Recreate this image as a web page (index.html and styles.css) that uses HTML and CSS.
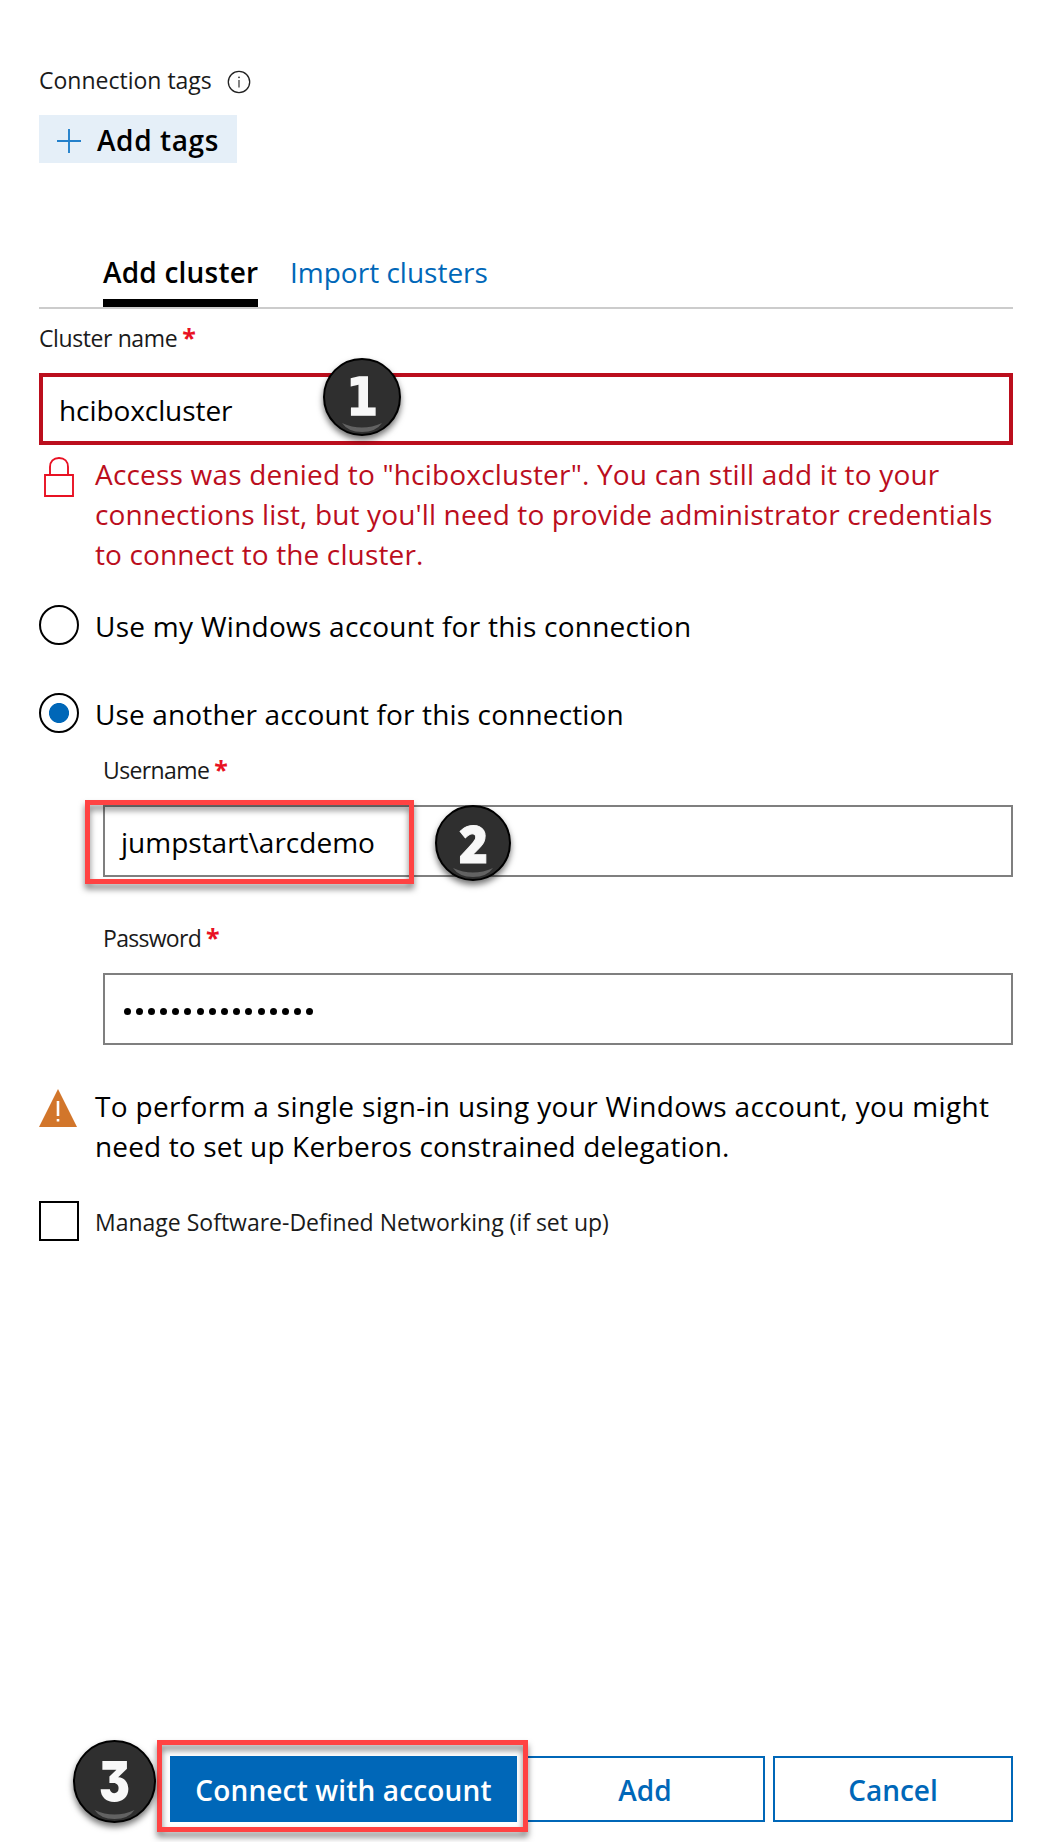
FILE: index.html
```html
<!DOCTYPE html>
<html lang="en">
<head>
<meta charset="utf-8">
<title>Add cluster</title>
<link rel="stylesheet" href="styles.css">
</head>
<body>
<main class="panel">
  <div class="label tags-label">Connection tags
    <svg class="info" viewBox="0 0 24 24"><circle cx="12" cy="12" r="10.7" fill="none" stroke="#222" stroke-width="1.3"/><path d="M12 10v7.5" stroke="#333" stroke-width="1.2"/><circle cx="12" cy="7.3" r=".9" fill="#333"/></svg>
  </div>
  <button class="add-tags">
    <svg class="plus" viewBox="0 0 24 24"><path d="M12 0v24M0 12h24" stroke="#2380cb" stroke-width="1.9"/></svg>
    <span>Add tags</span>
  </button>

  <nav class="tabs">
    <a class="tab active">Add cluster</a>
    <a class="tab">Import clusters</a>
  </nav>

  <div class="label cluster-label"><span>Cluster name</span><b class="req">*</b></div>
  <div class="field invalid">hciboxcluster</div>

  <div class="message error">
    <svg class="lock" viewBox="0 0 30 40" fill="none" stroke="#e81123" stroke-width="1.9"><path d="M1 18h28v21H1z"/><path d="M6 18V10C6 4.500 9.500 1 15 1s9 3.500 9 9v8"/></svg>
    <p><span class="s2">Access was denied to "hciboxcluster". You can still add it to your</span>
    <span class="s1">connections list, but you'll need to provide administrator credentials</span>
    <span class="s1">to connect to the cluster.</span></p>
  </div>

  <div class="choice first"><i class="radio"></i><span class="s3">Use my Windows account for this connection</span></div>
  <div class="choice second"><i class="radio checked"></i><span class="s1">Use another account for this connection</span></div>

  <section class="credentials">
    <div class="label user-label"><span>Username</span><b class="req">*</b></div>
    <div class="field">jumpstart\arcdemo</div>
    <div class="label pass-label"><span>Password</span><b class="req">*</b></div>
    <div class="field password">
      <i></i><i></i><i></i><i></i><i></i><i></i><i></i><i></i><i></i><i></i><i></i><i></i><i></i><i></i><i></i><i></i>
    </div>
  </section>

  <div class="message warning">
    <svg class="triangle" viewBox="0 0 38 38"><path d="M19 0l19 38H0z" fill="#d2762b"/><path d="M19 12v15M19 30v2.600" stroke="#fff" stroke-width="2.600"/></svg>
    <p><span class="s4">To perform a single sign-in using your Windows account, you might</span>
    <span class="s1">need to set up Kerberos constrained delegation.</span></p>
  </div>

  <div class="choice sdn"><i class="checkbox"></i><span>Manage Software-Defined Networking (if set up)</span></div>

  <footer class="actions">
    <button class="btn primary">Connect with account</button>
    <button class="btn">Add</button>
    <button class="btn">Cancel</button>
  </footer>
</main>

<div class="frame frame-user"></div>
<div class="frame frame-connect"></div>
<div class="badge badge-1"><span>1</span><svg viewBox="0 0 40 10"><path d="M0 0Q20 9 40 0Q34 9 20 9Q6 9 0 0z" fill="#626262"/></svg></div>
<div class="badge badge-2"><span>2</span><svg viewBox="0 0 40 10"><path d="M0 0Q20 9 40 0Q34 9 20 9Q6 9 0 0z" fill="#626262"/></svg></div>
<div class="badge badge-3"><span>3</span><svg viewBox="0 0 40 10"><path d="M0 0Q20 9 40 0Q34 9 20 9Q6 9 0 0z" fill="#626262"/></svg></div>
</body>
</html>
```
FILE: styles.css
```css
* { box-sizing: border-box; }
body {
  margin: 0;
  position: relative;
  width: 1055px;
  height: 1842px;
  overflow: hidden;
  background: #fff;
  color: #000;
  font: 28px/40px "Open Sans", "Noto Sans", sans-serif;
}
p { margin: 0; }
p span { display: block; white-space: nowrap; }
button { font: inherit; border: 0; margin: 0; padding: 0; color: inherit; }
svg { display: block; flex: none; }

.panel {
  display: flex;
  flex-direction: column;
  height: 1842px;
  padding: 64px 42px 20px 39px;
}

.label {
  display: flex;
  font-size: 23px;
  line-height: 32px;
  height: 32px;
  color: #1a1a1a;
}
.info { width: 24px; height: 24px; margin: 6px 0 0 15px; }
.req {
  color: #e81123;
  font: 700 25px/31px "Open Sans", sans-serif;
  margin-left: 5px;
}

.add-tags {
  display: flex;
  align-items: center;
  width: 198px;
  height: 48px;
  margin-top: 19px;
  padding-left: 18px;
  gap: 16px;
  background: #e5eff8;
  font-weight: 600;
  letter-spacing: .6px;
}
.add-tags span { padding-top: 2px; }
.plus { width: 24px; height: 24px; margin-top: 4px; }

.tabs {
  display: flex;
  gap: 32px;
  height: 57px;
  margin-top: 89px;
  padding-left: 64px;
  border-bottom: 2px solid #ccc;
}
.tab { height: 55px; color: #0067b8; }
.tab.active {
  width: 155px;
  color: #000;
  font-weight: 600;
  letter-spacing: .2px;
  border-bottom: 8px solid #000;
  white-space: nowrap;
}

.cluster-label { margin-top: 13px; letter-spacing: -.4px; }
.field {
  height: 72px;
  border: 2px solid #7f7f7f;
  padding: 15px 16px 0;
}
.field.invalid {
  margin-top: 19px;
  border: 4px solid #bb0e1d;
  padding: 13px 16px 0;
  letter-spacing: -.08px;
}

.message { display: flex; }
.error { margin-top: 9px; color: #bb0e1d; }
.lock { width: 30px; height: 40px; margin: 3px 21px 0 5px; }
.s1 { letter-spacing: .14px; }
.s2 { letter-spacing: .19px; }
.s3 { letter-spacing: .25px; }
.s4 { letter-spacing: .33px; }

.choice { display: flex; height: 40px; gap: 16px; }
.choice span { padding-top: 1px; white-space: nowrap; }
.first { margin-top: 31px; }
.second { margin-top: 48px; }
.radio {
  width: 40px;
  height: 40px;
  border: 2px solid #000;
  border-radius: 50%;
}
.radio.checked { background: radial-gradient(circle, #0067b8 9.6px, transparent 10.4px); }

.credentials { margin-left: 64px; }
.user-label { margin-top: 21px; letter-spacing: -.62px; }
.pass-label { margin-top: 45px; letter-spacing: -.7px; }
.credentials .field { margin-top: 19px; }
.password {
  display: flex;
  gap: 5.200px;
  padding: 33px 18px 0 19px;
}
.credentials .password { padding-left: 18.500px; }
.password i {
  width: 7px;
  height: 7px;
  border-radius: 50%;
  background: #000;
}

.warning { margin-top: 41px; }
.triangle { width: 38px; height: 38px; margin: 3px 18px 0 0; }

.sdn { margin-top: 35px; font-size: 23px; color: #1a1a1a; }
.checkbox { width: 40px; height: 40px; border: 2px solid #000; }

.actions {
  display: flex;
  margin-top: auto;
  margin-left: 131px;
}
.btn {
  width: 240px;
  height: 66px;
  margin-left: 8px;
  padding-top: 1px;
  border: 2px solid #0067b8;
  background: #fff;
  color: #0067b8;
  font-weight: 600;
}
.btn.primary {
  width: 347px;
  margin-left: 0;
  background: #0067b8;
  color: #fff;
  letter-spacing: .15px;
}

.frame {
  position: absolute;
  border: 5px solid #ff4343;
  filter: drop-shadow(0 5px 3px rgba(0, 0, 0, .5));
}
.frame-user { left: 85px; top: 800px; width: 329px; height: 84px; }
.frame-connect { left: 157px; top: 1740px; width: 371px; height: 92px; }

.badge {
  position: absolute;
  display: flex;
  justify-content: center;
  border: 2px solid #000;
  border-radius: 50%;
  background: #2f2f2f;
  color: #f8f8f8;
  box-shadow: 0 4px 6px rgba(0, 0, 0, .55);
}
.badge svg { position: absolute; bottom: 1px; width: 40px; height: 10px; }
.badge-1 { left: 323px; top: 358px; width: 78px; height: 78px; }
.badge-1 span { font: 700 52px/75px "DejaVu Sans", sans-serif; -webkit-text-stroke: 1.500px #f8f8f8; transform: scaleX(.88); }
.badge-2 { left: 435px; top: 805px; width: 76px; height: 76px; }
.badge-2 span { font: 800 52px/71px "Open Sans", sans-serif; -webkit-text-stroke: 1px #f8f8f8; transform: scaleX(.94); }
.badge-3 { left: 73px; top: 1740px; width: 83px; height: 83px; }
.badge-3 span { font: 900 55px/78px Inter, sans-serif; font-feature-settings: "cv09"; transform: scaleX(.84); }
.badge-3 svg { width: 43px; }
```
